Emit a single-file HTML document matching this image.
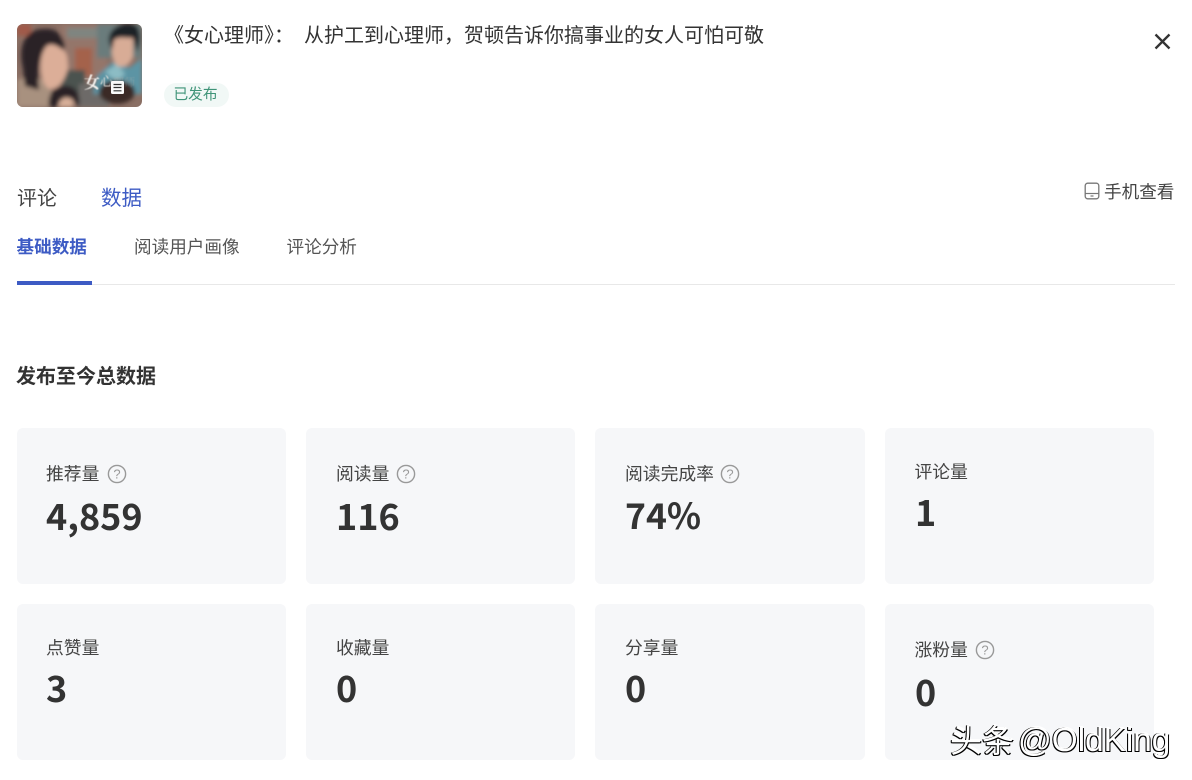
<!DOCTYPE html>
<html><head><meta charset="utf-8">
<style>
html,body{margin:0;padding:0;background:#fff}
body{width:1192px;height:780px;position:relative;overflow:hidden;font-family:"Liberation Sans","Noto Sans CJK SC",sans-serif;color:#333}
.a{position:absolute;white-space:nowrap;line-height:1}
.card{position:absolute;width:269px;height:156px;background:#f6f7f9;border-radius:6px}
.l{position:absolute;left:29px;font-size:17.8px;line-height:1;color:#444;white-space:nowrap;letter-spacing:0}
.n{position:absolute;left:29px;font-family:"Noto Sans CJK SC",sans-serif;font-weight:700;font-size:36px;line-height:1;color:#333;white-space:nowrap}
.q{position:absolute;width:20px;height:20px}
</style></head><body>
<svg class="a" style="left:17px;top:24px;border-radius:6px" width="125" height="83" viewBox="0 0 125 83">
<defs><filter id="b"><feGaussianBlur stdDeviation="2"/></filter><filter id="c"><feGaussianBlur stdDeviation="0.4"/></filter></defs>
<rect width="125" height="83" fill="#8a6f64"/>
<g filter="url(#b)">
<rect x="44" y="0" width="46" height="56" fill="#94766a"/>
<rect x="50" y="4" width="36" height="10" fill="#7f8580"/>
<rect x="58" y="24" width="17" height="28" fill="#a4624c"/>
<rect x="80" y="0" width="45" height="34" fill="#6a7c7c"/>
<rect x="0" y="55" width="34" height="28" fill="#a8917f"/>
<rect x="0" y="0" width="14" height="12" fill="#a05a4a"/>
<path d="M44 46 H68 V70 H44Z" fill="#4c5250"/>
<rect x="62" y="60" width="30" height="23" fill="#6d6a68"/>
<path d="M80 52 L98 36 L112 44 L125 34 V70 H76Z" fill="#5b94a4"/>
<path d="M88 48 L100 40 L108 50 L100 58Z" fill="#8cbcc4"/>
<path d="M28 22 C36 18 46 22 50 32 L51 44 C48 56 42 66 32 65 C24 60 20 40 28 22Z" fill="#dcae98"/>
<path d="M6 44 C0 20 10 4 28 5 C40 4 46 12 48 22 L46 26 C38 20 32 18 28 24 C22 34 20 50 22 66 L8 62Z" fill="#2a2327"/>
<path d="M96 12 C98 8 112 8 116 14 L116 32 C114 42 104 46 98 40 C94 32 94 22 96 12Z" fill="#d8ac96"/>
<path d="M92 18 C90 2 110 -4 120 2 C124 8 124 18 120 28 L116 14 C108 14 102 12 97 16 L95 26Z" fill="#1f2428"/>
<path d="M42 76 C44 70 54 70 56 76 L56 83 H42Z" fill="#d8b09a"/>
<path d="M32 83 C30 66 42 60 52 62 C60 64 64 72 62 83 L56 76 C50 72 44 72 40 83Z" fill="#2c2426"/>
<ellipse cx="100" cy="68" rx="18" ry="12" fill="#3a2a28"/>
</g>
<g filter="url(#c)">
<text x="67" y="64" font-family="'Noto Serif CJK SC',serif" font-weight="700" font-size="16" fill="#f6f2ee">女</text>
<text x="83" y="62" font-family="'Noto Serif CJK SC',serif" font-size="13" fill="#eee8e2">心</text>
<text x="96" y="62" font-family="'Noto Serif CJK SC',serif" font-size="11" fill="#c8b8b0" opacity=".35">理师</text>
</g>
<rect x="94" y="57" width="13" height="13" rx="1.5" fill="#fafafa"/>
<path d="M96.5 60.5H104.5M96.5 63.5H104.5M96.5 66.8H104.5" stroke="#333" stroke-width="1.2"/>
</svg>

<div class="a" style="left:164px;top:25px;font-size:20px;line-height:22px;color:#333">《女心理师》：<span style="margin-left:10px">从护工到心理师，贺顿告诉你搞事业的女人可怕可敬</span></div>
<div class="a" style="left:163px;top:84px;width:65px;height:24px;border-radius:12px;color:#3f9478;font-size:14.7px;line-height:22px;text-align:center;z-index:1">已发布</div>
<div class="a" style="left:164px;top:83px;width:65px;height:24px;border-radius:12px;background:#f1f8f6"></div>

<svg class="a" style="left:1153px;top:32px" width="19" height="19" viewBox="0 0 19 19"><path d="M2.5 2.5L16.5 16.5M16.5 2.5L2.5 16.5" stroke="#333" stroke-width="2.3"/></svg>

<div class="a" style="left:17px;top:189px;font-size:20px;color:#444">评论</div>
<div class="a" style="left:101px;top:189px;font-size:20.5px;color:#3d5bc4">数据</div>
<svg class="a" style="left:1084px;top:182px" width="16" height="18" viewBox="0 0 16 18"><rect x="1.2" y="1.2" width="13.6" height="15.6" rx="2.5" fill="none" stroke="#777" stroke-width="1.3"/><path d="M1.5 11.5H14.5" stroke="#777" stroke-width="1.2"/><path d="M6.5 14H9.5" stroke="#777" stroke-width="1.2"/></svg>
<div class="a" style="left:1104px;top:184px;font-size:17.6px;color:#444">手机查看</div>

<div class="a" style="left:16.5px;top:239px;font-size:17.6px;font-weight:700;color:#3d5bc4">基础数据</div>
<div class="a" style="left:134px;top:239px;font-size:17.6px;color:#555">阅读用户画像</div>
<div class="a" style="left:286.5px;top:239px;font-size:17.6px;color:#555">评论分析</div>
<div class="a" style="left:17px;top:284px;width:1158px;height:1px;background:#e8e8e8"></div>
<div class="a" style="left:17px;top:281px;width:75px;height:4px;background:#3d5bc4"></div>

<div class="a" style="left:16px;top:367px;font-size:20px;font-weight:700;color:#333">发布至今总数据</div>

<div class="card" style="left:17px;top:428px"><div class="l" style="top:38px">推荐量</div><svg class="q" style="left:90px;top:36px" viewBox="0 0 20 20"><circle cx="10" cy="10" r="8.6" fill="none" stroke="#999" stroke-width="1.4"/><text x="10" y="14.5" text-anchor="middle" font-size="13" fill="#999" font-family="Liberation Sans">?</text></svg><div class="n" style="top:69px">4,859</div></div>
<div class="card" style="left:306px;top:428px"><div class="l" style="left:30px;top:38px">阅读量</div><svg class="q" style="left:90px;top:36px" viewBox="0 0 20 20"><circle cx="10" cy="10" r="8.6" fill="none" stroke="#999" stroke-width="1.4"/><text x="10" y="14.5" text-anchor="middle" font-size="13" fill="#999" font-family="Liberation Sans">?</text></svg><div class="n" style="left:30px;top:69px">116</div></div>
<div class="card" style="left:595px;top:428px;width:270px"><div class="l" style="left:30px;top:38px">阅读完成率</div><svg class="q" style="left:125px;top:36px" viewBox="0 0 20 20"><circle cx="10" cy="10" r="8.6" fill="none" stroke="#999" stroke-width="1.4"/><text x="10" y="14.5" text-anchor="middle" font-size="13" fill="#999" font-family="Liberation Sans">?</text></svg><div class="n" style="left:30px;top:69px;font-size:35.5px">74%</div></div>
<div class="card" style="left:885px;top:428px"><div class="l" style="left:29.5px;top:36px">评论量</div><div class="n" style="left:30px;top:65px">1</div></div>

<div class="card" style="left:17px;top:604px"><div class="l" style="top:36px">点赞量</div><div class="n" style="top:65px">3</div></div>
<div class="card" style="left:306px;top:604px"><div class="l" style="left:30px;top:36px">收藏量</div><div class="n" style="left:30px;top:65px">0</div></div>
<div class="card" style="left:595px;top:604px;width:270px"><div class="l" style="left:30px;top:36px">分享量</div><div class="n" style="left:30px;top:65px">0</div></div>
<div class="card" style="left:885px;top:604px"><div class="l" style="left:29.5px;top:38px">涨粉量</div><svg class="q" style="left:90px;top:36px" viewBox="0 0 20 20"><circle cx="10" cy="10" r="8.6" fill="none" stroke="#999" stroke-width="1.4"/><text x="10" y="14.5" text-anchor="middle" font-size="13" fill="#999" font-family="Liberation Sans">?</text></svg><div class="n" style="left:30px;top:69px">0</div></div>

<div class="a" style="left:950px;top:725px;font-size:32px;line-height:32px;color:#fff;text-shadow:-1px 0 0 #000,0 1px 0 #000,1px 1px 0 #000,-1px 1px 0 #000,0 -1px 0 #fff">头条<span style="position:absolute;left:68px;top:0;font-size:33.3px">@OldKing</span></div>
</body></html>
